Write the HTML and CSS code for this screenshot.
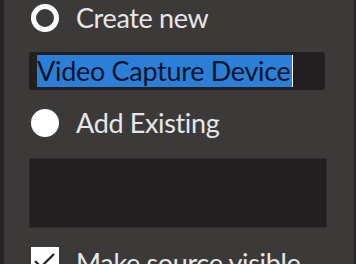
FILE: index.html
```html
<!DOCTYPE html>
<html lang="en">
<head>
   <meta charset="UTF-8">
   <meta name="viewport" content="width=device-width, initial-scale=1.0">
   <title>Create source</title>
   <link rel="stylesheet" href="styles.css">
</head>
<body>
   <div id="panel">
      <div class="option">
         <span class="radio"></span>
         <span class="label">Create new</span>
      </div>
      <div class="naam">
         <span class="selectie">Video Capture Device</span><span class="cursor"></span>
      </div>
      <div class="option">
         <span class="radio vol"></span>
         <span class="label">Add Existing</span>
      </div>
      <div class="lijst"></div>
      <div class="option check-rij">
         <span class="vinkje">
            <svg width="28" height="28" viewBox="0 0 28 28"><path d="M4 14 L10 20 L23 7" fill="none" stroke="#2b2a2a" stroke-width="2.4"/></svg>
         </span>
         <span class="label">Make source visible</span>
      </div>
   </div>
</body>
</html>
```

FILE: styles.css
```css
*{
   margin: 0;
   padding: 0;
   box-sizing: border-box;
}

body{
   width: 356px;
   height: 264px;
   overflow: hidden;
   background: #262424;
   font-family: "Lato", "Open Sans", sans-serif;
}

#panel{
   margin-left: 4px;
   width: 350px;
   height: 264px;
   overflow: hidden;
   background: #3c3a39;
   padding: 0 0 0 25px;
   display: flex;
   flex-direction: column;
}

#panel > *{
   flex-shrink: 0;
}

.option{
   display: flex;
   align-items: center;
   height: 36px;
   gap: 17px;
   padding-left: 2px;
}

.label{
   color: #e6e7ea;
   font-size: 27px;
   letter-spacing: -0.35px;
   line-height: 36px;
}

.radio{
   width: 28px;
   height: 28px;
   border-radius: 50%;
   border: 5px solid #fff;
   flex-shrink: 0;
}

.radio.vol{
   background: #fff;
}

.naam{
   margin-top: 16px;
   width: 296px;
   height: 38px;
   background: #211f1f;
   border-radius: 3px;
   display: flex;
   align-items: center;
   padding-left: 8px;
}

.selectie{
   background: #2b7fd9;
   color: #0a1526;
   font-size: 27px;
   letter-spacing: -0.3px;
   line-height: 32px;
   height: 32px;
   padding-right: 1px;
}

.cursor{
   width: 1px;
   height: 32px;
   background: #fff;
}

.naam + .option{
   margin-top: 15px;
}

.lijst{
   margin-top: 17px;
   width: 298px;
   height: 70px;
   background: #221f20;
   border: 1px solid #2f2d2d;
}

.check-rij{
   margin-top: 19px;
   align-items: flex-start;
}

.vinkje{
   width: 28px;
   height: 28px;
   background: #fff;
   flex-shrink: 0;
}

.vinkje svg{
   display: block;
}

.check-rij .label{
   margin-top: -2px;
}
```
